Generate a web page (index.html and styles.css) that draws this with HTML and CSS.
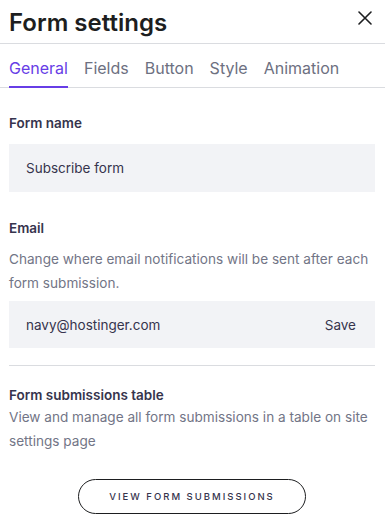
FILE: index.html
```html
<!DOCTYPE html>
<html>
<head>
<meta charset="utf-8">
<link rel="stylesheet" href="styles.css">
</head>
<body>
<div class="panel">
  <header class="header">
    <h1 class="title">Form settings</h1>
    <button class="close" aria-label="Close">
      <svg width="14" height="14" viewBox="0 0 14 14"><path d="M1 1L13 13M13 1L1 13" stroke="#1d1e20" stroke-width="1.6" stroke-linecap="round"/></svg>
    </button>
  </header>
  <nav class="tabs">
    <span class="tab active">General</span>
    <span class="tab">Fields</span>
    <span class="tab">Button</span>
    <span class="tab">Style</span>
    <span class="tab">Animation</span>
  </nav>
  <section class="content">
    <div class="group name">
      <div class="label">Form name</div>
      <div class="field">Subscribe form</div>
    </div>
    <div class="group email">
      <div class="label">Email</div>
      <p class="desc">Change where email notifications will be sent after each form submission.</p>
      <div class="field split"><span>navy@hostinger.com</span><span>Save</span></div>
    </div>
    <hr class="divider">
    <div class="group table">
      <div class="label">Form submissions table</div>
      <p class="desc">View and manage all form submissions in a table on site settings page</p>
      <div class="btn-row"><button class="outline">VIEW FORM SUBMISSIONS</button></div>
    </div>
  </section>
</div>
</body>
</html>
```

FILE: styles.css
```css
* { box-sizing: border-box; }
html, body { margin: 0; padding: 0; background: #fff; }
body { font-family: Inter, "Noto Sans", sans-serif; color: #1d1e20; }
.panel { width: 385px; }
.header { display: flex; align-items: flex-start; justify-content: space-between; height: 44px; padding: 8px 13px 0 9px; border-bottom: 1px solid #dadce0; }
.title { margin: 0; font-size: 24px; font-weight: 600; line-height: 29px; color: #1d1e20; }
.close { border: 0; background: none; padding: 0; width: 14px; height: 14px; display: flex; margin-top: 3px; }
.tabs { display: flex; gap: 16px; padding: 0 9px; height: 44px; border-bottom: 1px solid #dadce0; align-items: stretch; }
.tab { font-size: 16px; color: #6d7081; display: flex; align-items: center; padding-top: 6px; border-bottom: 2px solid transparent; margin-bottom: -1px; }
.tab.active { color: #673de6; border-bottom-color: #673de6; }
.content { padding: 0 10px 0 9px; }
.group { display: flex; flex-direction: column; }
.label { font-size: 13.5px; font-weight: 600; color: #36344d; line-height: 18px; }
.group.name .label { margin-top: 26px; }
.field { margin-top: 12px; background: #f2f3f6; height: 48px; display: flex; align-items: center; padding: 0 19px 0 17px; font-size: 13.5px; color: #36344d; }
.split { justify-content: space-between; margin-top: 6px; height: 47px; }
.group.email .label { margin-top: 27px; }
.desc { margin: 10px 0 0; font-size: 13.6px; line-height: 24px; color: #727586; }
.divider { border: 0; border-top: 1px solid #dadce0; margin: 17px 0 0; }
.group.table .label { margin-top: 20px; }
.group.table .desc { margin-top: 1px; }
.btn-row { display: flex; justify-content: center; margin-top: 26px; }
.outline { width: 228px; height: 35px; border: 1px solid #1d1e20; border-radius: 18px; background: #fff; font-family: inherit; font-size: 9.5px; letter-spacing: 2px; color: #36344d; font-weight: 500; padding: 0; }
```
